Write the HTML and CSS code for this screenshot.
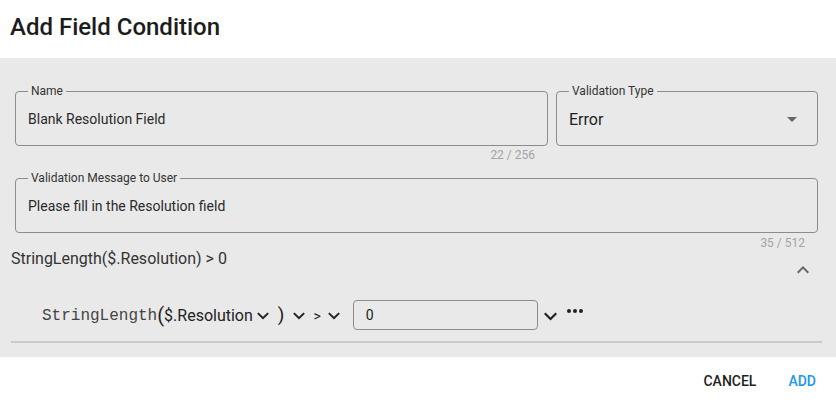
FILE: index.html
```html
<!DOCTYPE html>
<html>
<head>
<meta charset="utf-8">
<link rel="stylesheet" href="styles.css">
</head>
<body>
<div class="dialog">
  <header class="dlg-head"><h1 class="dlg-title">Add Field Condition</h1></header>
  <section class="dlg-body">
    <div class="fields">
      <div class="row-top">
        <div class="outlined name-field">
          <span class="flabel">Name</span>
          <span class="fvalue">Blank Resolution Field</span>
        </div>
        <div class="outlined type-field">
          <span class="flabel">Validation Type</span>
          <span class="fvalue big">Error</span>
          <svg class="drop" viewBox="7 10 10 5" width="10" height="5"><path d="M7 10l5 5 5-5z"/></svg>
        </div>
      </div>
      <div class="counter-row name-counter"><span class="counter">22 / 256</span></div>
      <div class="outlined msg-field">
        <span class="flabel">Validation Message to User</span>
        <span class="fvalue">Please fill in the Resolution field</span>
      </div>
      <div class="counter-row msg-counter"><span class="counter">35 / 512</span></div>
    </div>
    <div class="expr">
      <div class="expr-head">
        <span class="expr-title">StringLength($.Resolution) &gt; 0</span>
        <svg class="chev-up" viewBox="0 0 24 24" width="24" height="24"><path d="M12 8l-6 6 1.41 1.41L12 10.83l4.59 4.58L18 14z"/></svg>
      </div>
      <div class="expr-row">
        <span class="fn">StringLength</span>
        <span class="paren">(</span>
        <span class="arg">$.Resolution</span>
        <svg class="chev c1" viewBox="6 8.2 12 8.2" width="12" height="8"><path d="M16.59 8.59L12 13.17 7.41 8.59 6 10l6 6 6-6z"/></svg>
        <span class="paren close">)</span>
        <svg class="chev c2" viewBox="6 8.2 12 8.2" width="12" height="8"><path d="M16.59 8.59L12 13.17 7.41 8.59 6 10l6 6 6-6z"/></svg>
        <span class="op">&gt;</span>
        <svg class="chev c3" viewBox="6 8.2 12 8.2" width="12" height="8"><path d="M16.59 8.59L12 13.17 7.41 8.59 6 10l6 6 6-6z"/></svg>
        <div class="val-input">0</div>
        <svg class="chev c4" viewBox="6 8.2 12 8.2" width="13" height="9"><path d="M16.59 8.59L12 13.17 7.41 8.59 6 10l6 6 6-6z"/></svg>
        <svg class="dots" viewBox="0 0 16 4" width="16" height="4"><circle cx="2" cy="2" r="2"/><circle cx="8" cy="2" r="2"/><circle cx="14" cy="2" r="2"/></svg>
      </div>
      <div class="divider"></div>
    </div>
  </section>
  <footer class="dlg-foot">
    <button class="btn cancel">Cancel</button>
    <button class="btn add">Add</button>
  </footer>
</div>
</body>
</html>
```
FILE: styles.css
```css
* { box-sizing: border-box; }
html, body { margin: 0; padding: 0; background: #fff; }
body { font-family: Roboto, "Liberation Sans", sans-serif; color: #222; width: 836px; height: 404px; overflow: hidden; }

.dlg-head { height: 58px; padding: 13px 0 0 10px; }
.dlg-title { margin: 0; font-size: 24px; line-height: 28px; font-weight: 500; color: #1c1c1c; letter-spacing: 0; }

.dlg-body { background: #e9e9e9; padding: 33px 0 14px 0; }

.fields { padding: 0 18px 0 15px; }
.row-top { display: flex; gap: 8px; }
.outlined { position: relative; height: 55px; border: 1px solid #8c8c8c; border-radius: 4px; display: flex; align-items: center; padding: 0 12px; }
.name-field { flex: 1; }
.type-field { width: 262px; justify-content: space-between; padding-right: 20px; }
.flabel { position: absolute; left: 12px; top: -8px; padding: 0 3px; background: #e9e9e9; font-size: 12px; line-height: 14px; color: #333; }
.fvalue { font-size: 14px; line-height: 20px; color: #2a2a2a; padding-top: 0; }
.fvalue.big { font-size: 16px; padding-top: 3px; color: #222; }
.drop { fill: #666; margin-top: 2px; }

.counter-row { display: flex; justify-content: flex-end; padding-right: 13px; }
.name-counter { width: 533px; height: 32px; padding-top: 3px; }
.msg-counter { height: 16px; padding-top: 4px; }
.counter { font-size: 12px; line-height: 12px; color: #a3a3a3; }

.expr { padding: 0 14px 0 11px; }
.expr-head { display: flex; justify-content: space-between; height: 33px; }
.expr-title { font-size: 16px; line-height: 20px; color: #333; align-self: flex-start; }
.chev-up { fill: #666; align-self: flex-end; margin-right: 7px; }

.expr-row { display: flex; align-items: center; height: 30px; margin-top: 18px; padding-left: 31px; color: #222; }
.fn { font-family: "Liberation Mono", "Courier New", monospace; font-size: 16px; color: #444; line-height: 20px; padding-top: 2px; }
.paren { font-size: 20px; line-height: 24px; color: #222; }
.paren.close { margin-left: 9px; font-size: 19px; }
.arg { font-size: 16px; line-height: 20px; margin-left: 0; color: #222; padding-top: 1px; }
.chev { fill: #222; margin-top: 2px; }
.c1 { margin-left: 4px; }
.c2 { margin-left: 9px; }
.op { font-size: 14px; margin-left: 8px; color: #222; padding-top: 2px; }
.c3 { margin-left: 7px; }
.val-input { margin-left: 13px; width: 185px; height: 30px; border: 1px solid #8c8c8c; border-radius: 4px; padding: 0 12px; font-size: 14px; line-height: 28px; color: #222; }
.c4 { margin-left: 6px; }
.dots { fill: #222; margin-left: 10px; margin-bottom: 8px; }

.divider { height: 2px; background: #cbcbcb; margin-top: 11px; }

.dlg-foot { display: flex; justify-content: flex-end; gap: 16px; padding: 6px 12px 0 0; }
.btn { font-family: Roboto, "Liberation Sans", sans-serif; font-size: 14px; font-weight: 500; text-transform: uppercase; background: none; border: 0; padding: 0 8px; height: 36px; line-height: 36px; cursor: pointer; letter-spacing: 0; }
.cancel { color: #1f1f1f; }
.add { color: #2196f3; }
```
